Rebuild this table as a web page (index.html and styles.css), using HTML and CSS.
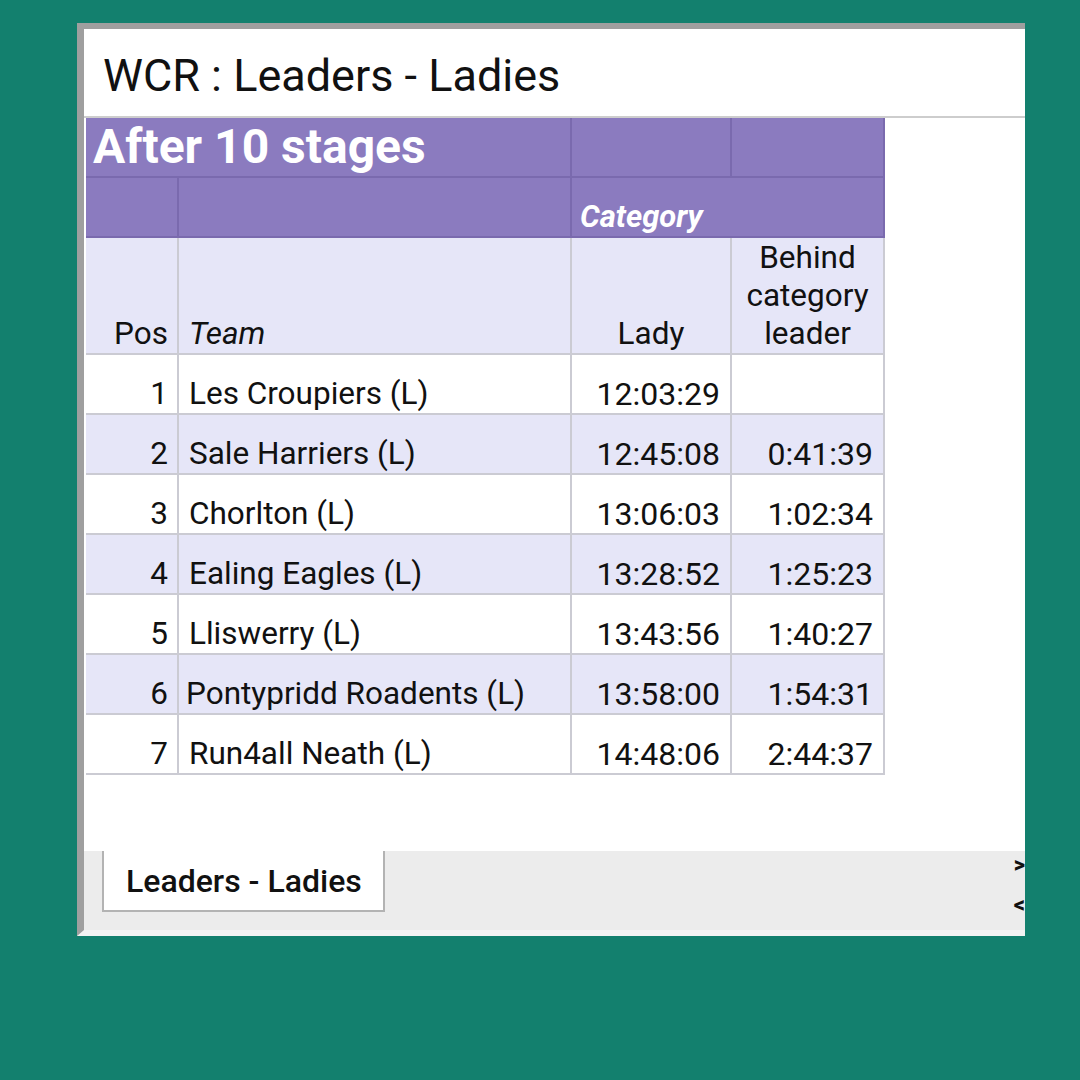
FILE: index.html
```html
<!DOCTYPE html>
<html lang="en">
<head>
<meta charset="utf-8">
<title>WCR : Leaders - Ladies</title>
<link rel="stylesheet" href="styles.css">
</head>
<body>
<div class="frame">
  <div class="title">WCR : Leaders - Ladies</div>
  <div class="sheet">
    <div class="grid">
      <div class="c hd span2 big">After 10 stages</div>
      <div class="c hd"></div>
      <div class="c hd last"></div>

      <div class="c hd first"></div>
      <div class="c hd"></div>
      <div class="c hd span2 last cat">Category</div>

      <div class="c sub r first">Pos</div>
      <div class="c sub l it">Team</div>
      <div class="c sub ctr">Lady</div>
      <div class="c sub ctr last">Behind<br>category<br>leader</div>

      <div class="c w r first">1</div><div class="c w l">Les Croupiers (L)</div><div class="c w r num">12:03:29</div><div class="c w r num last"></div>
      <div class="c v r first">2</div><div class="c v l">Sale Harriers (L)</div><div class="c v r num">12:45:08</div><div class="c v r num last">0:41:39</div>
      <div class="c w r first">3</div><div class="c w l">Chorlton (L)</div><div class="c w r num">13:06:03</div><div class="c w r num last">1:02:34</div>
      <div class="c v r first">4</div><div class="c v l">Ealing Eagles (L)</div><div class="c v r num">13:28:52</div><div class="c v r num last">1:25:23</div>
      <div class="c w r first">5</div><div class="c w l">Lliswerry (L)</div><div class="c w r num">13:43:56</div><div class="c w r num last">1:40:27</div>
      <div class="c v r first">6</div><div class="c v l tight">Pontypridd Roadents (L)</div><div class="c v r num">13:58:00</div><div class="c v r num last">1:54:31</div>
      <div class="c w r first">7</div><div class="c w l">Run4all Neath (L)</div><div class="c w r num">14:48:06</div><div class="c w r num last">2:44:37</div>
    </div>
  </div>
  <div class="tabbar">
    <div class="tab">Leaders - Ladies</div>
    <div class="arrows">
      <span class="arrow">&gt;</span>
      <span class="arrow">&lt;</span>
    </div>
  </div>
</div>
</body>
</html>
```
FILE: styles.css
```css
html, body {
  margin: 0;
  padding: 0;
}
body {
  background: #13806e;
  width: 1080px;
  height: 1080px;
  font-family: Roboto, "Liberation Sans", sans-serif;
  color: #111;
}
.frame {
  margin-left: 77px;
  margin-top: 23px;
  width: 941px;
  height: 901px;
  border-left: 7px solid #9f9f9f;
  border-top: 6px solid #9f9f9f;
  border-bottom: 6px solid #f3f3f3;
  background: #fff;
  display: flex;
  flex-direction: column;
}
.title {
  box-sizing: border-box;
  height: 89px;
  border-bottom: 2px solid #cdcdcd;
  padding-left: 19px;
  padding-top: 5px;
  display: flex;
  align-items: center;
  font-size: 45px;
  color: #111;
}
.sheet {
  flex: 1;
  padding-left: 2px;
}
.grid {
  display: grid;
  grid-template-columns: 93px 393px 160px 153px;
  grid-template-rows: 60px 60px 117px repeat(7, 60px);
  line-height: 38px;
  font-size: 31.5px;
}
.c {
  box-sizing: border-box;
  border-right: 2px solid #cbcbd3;
  border-bottom: 2px solid #cbcbd3;
  display: flex;
  align-items: flex-end;
  padding: 0 10px 0 10px;
  white-space: nowrap;
}
.first { padding-right: 9px; }
.num { font-size: 32px; }
.hd {
  background: #8b7bbf;
  border-right-color: #7a6aae;
  border-bottom-color: #7a6aae;
  color: #fff;
}
.span2 {
  grid-column: span 2;
}
.big {
  font-size: 48px;
  font-weight: 700;
  line-height: 58px;
  padding-left: 7px;
}
.cat {
  font-size: 31px;
  font-style: italic;
  font-weight: 700;
  padding-left: 8px;
  padding-bottom: 0;
}
.sub {
  background: #e6e6f8;
  text-align: center;
}
.w { background: #fff; }
.v { background: #e6e6f8; }
.r { justify-content: flex-end; }
.l { justify-content: flex-start; }
.ctr { justify-content: center; }
.it { font-style: italic; }
.tight { padding-left: 7px; }
.tabbar {
  margin-top: auto;
  height: 79px;
  background: #ececec;
  display: flex;
  align-items: flex-start;
}
.tab {
  margin-left: 18px;
  padding-left: 22px;
  box-sizing: border-box;
  height: 61px;
  width: 283px;
  background: #fff;
  border-left: 2px solid #b3b3b3;
  border-right: 2px solid #b3b3b3;
  border-bottom: 2px solid #b3b3b3;
  display: flex;
  align-items: center;
  font-size: 32px;
  font-weight: 500;
  color: #111;
}
.arrows {
  margin-left: auto;
  display: flex;
  flex-direction: column;
  align-items: flex-end;
  padding-top: 0;
  gap: 12px;
}
.arrow {
  font-size: 22px;
  font-weight: 900;
  line-height: 28px;
  color: #111;
}
```
